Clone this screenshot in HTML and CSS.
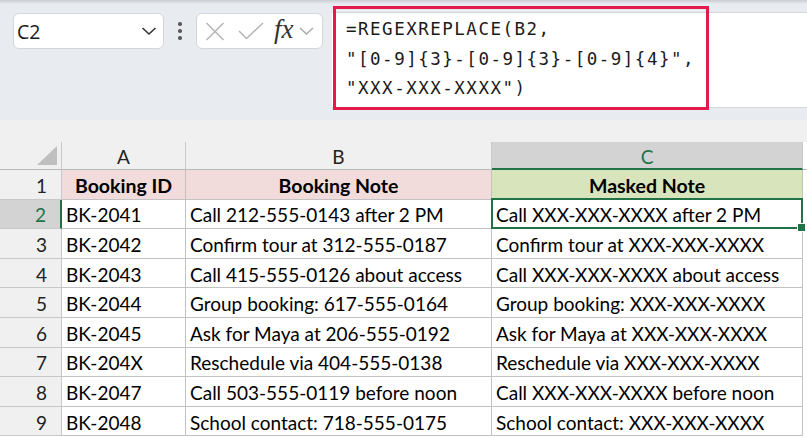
FILE: index.html
```html
<!DOCTYPE html>
<html>
<head>
<meta charset="utf-8">
<link rel="stylesheet" href="styles.css">
</head>
<body>
<div class="toolbar">
  <div class="namebox">
    <span class="namebox-text">C2</span>
    <svg class="namebox-chev" width="16" height="10" viewBox="0 0 16 10"><path d="M1.5 2 L8 8 L14.5 2" fill="none" stroke="#333" stroke-width="1.6"/></svg>
  </div>
  <div class="dots"><span></span><span></span><span></span></div>
  <div class="fxbox">
    <svg class="icon-x" width="20" height="19" viewBox="0 0 20 19"><path d="M1.5 1 L18.5 18 M18.5 1 L1.5 18" fill="none" stroke="#b4b4b4" stroke-width="1.5"/></svg>
    <svg class="icon-check" width="26" height="18" viewBox="0 0 26 18"><path d="M1 9 L8.5 16.5 L25 1" fill="none" stroke="#b4b4b4" stroke-width="1.5"/></svg>
    <span class="fx">fx</span>
    <svg class="fx-chev" width="15" height="8" viewBox="0 0 15 8"><path d="M1 1 L7.5 7 L14 1" fill="none" stroke="#a8a8a8" stroke-width="1.4"/></svg>
  </div>
  <div class="formula">
    <div class="formula-line">=REGEXREPLACE(B2,</div>
    <div class="formula-line">"[0-9]{3}-[0-9]{3}-[0-9]{4}",</div>
    <div class="formula-line">"XXX-XXX-XXXX")</div>
  </div>
  <div class="highlight"></div>
</div>
<div class="gap"></div>
<div class="sheet">
  <div class="corner"><svg width="20" height="19" viewBox="0 0 20 19"><path d="M20 0 L20 19 L0 19 Z" fill="#bfbfbf"/></svg></div>
  <div class="colhead">A</div>
  <div class="colhead">B</div>
  <div class="colhead sel">C</div>
  <div class="colhead rest"></div>

  <div class="rowhead">1</div>
  <div class="cell th pink">Booking ID</div>
  <div class="cell th pink">Booking Note</div>
  <div class="cell th green">Masked Note</div>
  <div class="rest"></div>

  <div class="rowhead sel">2</div>
  <div class="cell">BK-2041</div>
  <div class="cell">Call 212-555-0143 after 2 PM</div>
  <div class="cell active">Call XXX-XXX-XXXX after 2 PM</div>
  <div class="rest"></div>

  <div class="rowhead">3</div>
  <div class="cell">BK-2042</div>
  <div class="cell">Confirm tour at 312-555-0187</div>
  <div class="cell">Confirm tour at XXX-XXX-XXXX</div>
  <div class="rest"></div>

  <div class="rowhead">4</div>
  <div class="cell">BK-2043</div>
  <div class="cell">Call 415-555-0126 about access</div>
  <div class="cell">Call XXX-XXX-XXXX about access</div>
  <div class="rest"></div>

  <div class="rowhead">5</div>
  <div class="cell">BK-2044</div>
  <div class="cell">Group booking: 617-555-0164</div>
  <div class="cell">Group booking: XXX-XXX-XXXX</div>
  <div class="rest"></div>

  <div class="rowhead">6</div>
  <div class="cell">BK-2045</div>
  <div class="cell">Ask for Maya at 206-555-0192</div>
  <div class="cell">Ask for Maya at XXX-XXX-XXXX</div>
  <div class="rest"></div>

  <div class="rowhead">7</div>
  <div class="cell">BK-204X</div>
  <div class="cell">Reschedule via 404-555-0138</div>
  <div class="cell">Reschedule via XXX-XXX-XXXX</div>
  <div class="rest"></div>

  <div class="rowhead">8</div>
  <div class="cell">BK-2047</div>
  <div class="cell">Call 503-555-0119 before noon</div>
  <div class="cell">Call XXX-XXX-XXXX before noon</div>
  <div class="rest"></div>

  <div class="rowhead">9</div>
  <div class="cell">BK-2048</div>
  <div class="cell">School contact: 718-555-0175</div>
  <div class="cell">School contact: XXX-XXX-XXXX</div>
  <div class="rest"></div>
</div>
</body>
</html>
```
FILE: styles.css
```css
html, body {
  margin: 0;
  padding: 0;
}
body {
  width: 807px;
  height: 438px;
  overflow: hidden;
  background: #ffffff;
  font-family: "Lato", "Liberation Sans", sans-serif;
}
.toolbar {
  position: relative;
  height: 120px;
  box-sizing: border-box;
  background: #e8ecf0;
  display: flex;
  align-items: flex-start;
  padding: 13px 0 0 13px;
  background-image: linear-gradient(#c9cdd1, #e8ecf0 4px);
}
.namebox {
  width: 151px;
  height: 36px;
  box-sizing: border-box;
  background: #fff;
  border: 1px solid #d3d6da;
  border-radius: 6px;
  display: flex;
  align-items: center;
  justify-content: space-between;
  padding: 0 6px 0 3px;
}
.namebox-text {
  font-family: "Open Sans", "Noto Sans", sans-serif;
  font-size: 19.5px;
  color: #1a1a1a;
}
.namebox-chev {
  display: block;
}
.dots {
  width: 32px;
  height: 36px;
  display: flex;
  flex-direction: column;
  align-items: center;
  justify-content: center;
  gap: 3.5px;
}
.dots span {
  width: 3.5px;
  height: 3.5px;
  border-radius: 50%;
  background: #5a5a5a;
}
.fxbox {
  width: 127px;
  height: 36px;
  box-sizing: border-box;
  background: #fff;
  border: 1px solid #d3d6da;
  border-radius: 6px;
  display: flex;
  align-items: center;
  padding-left: 8px;
}
.icon-x { display: block; margin-right: 13px; }
.icon-check { display: block; margin-right: 10px; }
.fx {
  font-family: "Liberation Serif", "DejaVu Serif", serif;
  font-style: italic;
  font-size: 27px;
  color: #333;
  line-height: 1;
  margin-top: -4px;
  margin-right: 5px;
}
.fx-chev { display: block; }
.formula {
  flex: 1;
  margin-left: 9px;
  margin-top: -1px;
  height: 96px;
  box-sizing: border-box;
  background: #fff;
  border-top: 1px solid #d3d6da;
  border-bottom: 1px solid #d3d6da;
  padding: 2px 0 0 14px;
}
.formula-line {
  font-family: "DejaVu Sans Mono", "Liberation Mono", monospace;
  font-size: 17.5px;
  letter-spacing: 1.5px;
  line-height: 29.5px;
  color: #1a1a1a;
  white-space: pre;
}
.highlight {
  position: absolute;
  left: 333px;
  top: 6px;
  width: 376px;
  height: 104px;
  box-sizing: border-box;
  border: 3px solid #e31b4c;
}
.gap {
  height: 22px;
  background: #f0f0f0;
}
.sheet {
  display: grid;
  grid-template-columns: 62px 124px 306px 311px 1fr;
  grid-template-rows: 28px repeat(9, 29.6px);
  background: #fff;
  font-size: 19px;
  color: #000;
}
.corner {
  background: #f0f0f0;
  border-right: 1px solid #c8c8c8;
  border-bottom: 1px solid #b9b9b9;
  display: flex;
  align-items: flex-end;
  justify-content: flex-end;
  padding: 0 4px 4px 0;
  box-sizing: border-box;
}
.corner svg { display: block; }
.colhead {
  background: #f0f0f0;
  border-right: 1px solid #c8c8c8;
  border-bottom: 1px solid #b9b9b9;
  box-sizing: border-box;
  display: flex;
  align-items: center;
  justify-content: center;
  padding-top: 2px;
  color: #222;
}
.colhead.sel {
  background: #d3d3d3;
  color: #217346;
  border-bottom: 2px solid #217346;
}
.colhead.rest {
  border-right: none;
}
.rowhead {
  background: #f0f0f0;
  border-right: 1px solid #c8c8c8;
  border-bottom: 1px solid #c8c8c8;
  box-sizing: border-box;
  display: flex;
  align-items: center;
  justify-content: flex-end;
  padding: 2px 14px 0 0;
  color: #222;
}
.rowhead.sel {
  background: #d3d3d3;
  color: #217346;
  border-right: 2px solid #217346;
}
.cell {
  border-right: 1px solid #c2c2c2;
  border-bottom: 1px solid #c2c2c2;
  box-sizing: border-box;
  display: flex;
  align-items: center;
  padding: 2px 0 0 4px;
  white-space: nowrap;
  overflow: visible;
}
.cell.th {
  justify-content: center;
  font-weight: 700;
  font-size: 19.5px;
  padding-left: 0;
}
.cell.pink { background: #f2dcdb; }
.cell.green { background: #d8e4bc; }
.rest { background: #fff; }
.cell.active {
  position: relative;
}
.cell.active::after {
  content: "";
  position: absolute;
  left: -1px;
  top: -2px;
  right: -1px;
  bottom: -1px;
  border: 2px solid #217346;
}
.cell.active::before {
  content: "";
  position: absolute;
  right: -4px;
  bottom: -4px;
  width: 7px;
  height: 7px;
  background: #217346;
  border: 1px solid #fff;
  z-index: 2;
}
```
